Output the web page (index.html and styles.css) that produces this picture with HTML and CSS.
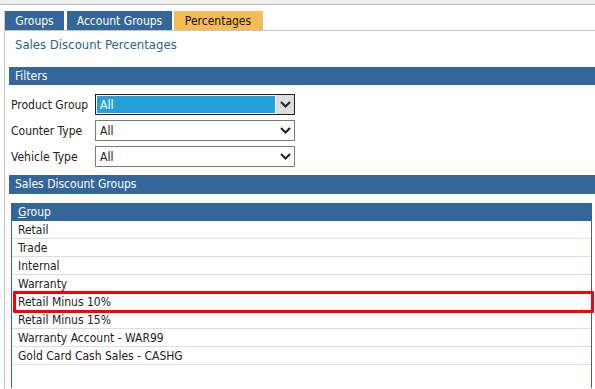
FILE: index.html
```html
<!DOCTYPE html>
<html>
<head>
<meta charset="utf-8">
<link rel="stylesheet" href="styles.css">
</head>
<body>
<div class="topbar"></div>
<div class="page">
  <div class="tabs">
    <div class="tab tab-groups">Groups</div>
    <div class="tab tab-account">Account Groups</div>
    <div class="tab tab-active">Percentages</div>
  </div>
  <div class="title">Sales Discount Percentages</div>

  <div class="bar bar-filters">Filters</div>
  <div class="filters">
    <div class="frow">
      <div class="flabel">Product Group</div>
      <div class="select select-focus">
        <div class="sval">All</div>
        <div class="sbtn"><svg width="11" height="7" viewBox="0 0 11 7"><path d="M1 1 L5.5 5.5 L10 1" fill="none" stroke="#222" stroke-width="2"/></svg></div>
      </div>
    </div>
    <div class="frow">
      <div class="flabel">Counter Type</div>
      <div class="select">
        <div class="sval">All</div>
        <div class="sbtn"><svg width="11" height="7" viewBox="0 0 11 7"><path d="M1 1 L5.5 5.5 L10 1" fill="none" stroke="#222" stroke-width="2"/></svg></div>
      </div>
    </div>
    <div class="frow">
      <div class="flabel">Vehicle Type</div>
      <div class="select">
        <div class="sval">All</div>
        <div class="sbtn"><svg width="11" height="7" viewBox="0 0 11 7"><path d="M1 1 L5.5 5.5 L10 1" fill="none" stroke="#222" stroke-width="2"/></svg></div>
      </div>
    </div>
  </div>

  <div class="bar bar-groups">Sales Discount Groups</div>
  <div class="grid">
    <div class="ghead"><span class="ul">G</span>roup</div>
    <div class="grow">Retail</div>
    <div class="grow">Trade</div>
    <div class="grow">Internal</div>
    <div class="grow">Warranty</div>
    <div class="grow">Retail Minus 10%</div>
    <div class="grow">Retail Minus 15%</div>
    <div class="grow">Warranty Account - WAR99</div>
    <div class="grow">Gold Card Cash Sales - CASHG</div>
    <div class="highlight"></div>
  </div>
</div>
</body>
</html>
```
FILE: styles.css
```css
html, body {
  margin: 0;
  padding: 0;
  background: #ffffff;
  height: 100%;
  overflow: hidden;
}
body {
  font-family: "DejaVu Sans Condensed", "DejaVu Sans", sans-serif;
  font-stretch: condensed;
  font-size: 12px;
  color: #222222;
}
.topbar {
  height: 4px;
  background: #f0f0f0;
  border-bottom: 1px solid #bdbdbd;
}
.page {
  margin-top: 6px;
  margin-left: 4px;
  border-left: 1px solid #c9c9c9;
  height: 378px;
  overflow: hidden;
}
.tabs {
  display: flex;
  height: 19px;
  border-bottom: 1px solid #c4c4c4;
}
.tab {
  box-sizing: border-box;
  background: #336699;
  color: #ffffff;
  height: 19px;
  padding-top: 2px;
  line-height: 17px;
  text-align: center;
  white-space: nowrap;
  font-size: 12px;
}
.tab-groups {
  width: 59px;
  margin-right: 3px;
}
.tab-account {
  width: 105px;
  margin-right: 2px;
}
.tab-active {
  width: 89px;
  background: #f6bb55;
  color: #111111;
  border-right: 1px solid #c4c4c4;
}
.title {
  color: #2c5f96;
  font-size: 13px;
  line-height: 16px;
  padding: 6px 0 0 10px;
  height: 15px;
}
.bar {
  margin-left: 4px;
  background: #336699;
  color: #ffffff;
  padding-left: 6px;
  font-size: 12px;
  box-sizing: border-box;
}
.bar-filters {
  margin-top: 15px;
  height: 18px;
  padding-top: 1px;
  line-height: 17px;
}
.bar-groups {
  margin-top: 8px;
  height: 19px;
  padding-top: 1px;
  line-height: 17px;
}
.filters {
  padding: 9px 0 0 6px;
  display: flex;
  flex-direction: column;
  gap: 5px;
}
.frow {
  display: flex;
  align-items: center;
  height: 21px;
}
.flabel {
  width: 84px;
  white-space: nowrap;
  padding-top: 1px;
}
.select {
  width: 198px;
  height: 19px;
  border: 1px solid #7a7a7a;
  display: flex;
  background: #ffffff;
}
.sval {
  flex: 1;
  padding-left: 4px;
  padding-top: 1px;
  line-height: 18px;
}
.sbtn {
  width: 18px;
  display: flex;
  align-items: center;
  justify-content: center;
}
.select-focus {
  border-color: #1f1f1f;
}
.select-focus .sval {
  background: #26a0da;
  color: #ffffff;
  margin: 1px;
  padding-top: 1px;
  line-height: 16px;
  padding-left: 3px;
}
.select-focus .sbtn {
  background: #dddddd;
}
.grid {
  position: relative;
  margin: 9px 3px 0 6px;
  border-left: 1px solid #336699;
  border-right: 1px solid #336699;
  height: 185px;
}
.ghead {
  background: #336699;
  color: #ffffff;
  height: 17px;
  padding-top: 1px;
  line-height: 17px;
  padding-left: 6px;
}
.ul {
  text-decoration: underline;
}
.grow {
  height: 16px;
  padding-top: 1px;
  line-height: 16px;
  border-bottom: 1px solid #dddddd;
  padding-left: 6px;
  white-space: nowrap;
}
.highlight {
  position: absolute;
  left: 1px;
  top: 88px;
  width: 575px;
  height: 16px;
  border: 3px solid #ff0000;
  border-radius: 1px;
}
```
